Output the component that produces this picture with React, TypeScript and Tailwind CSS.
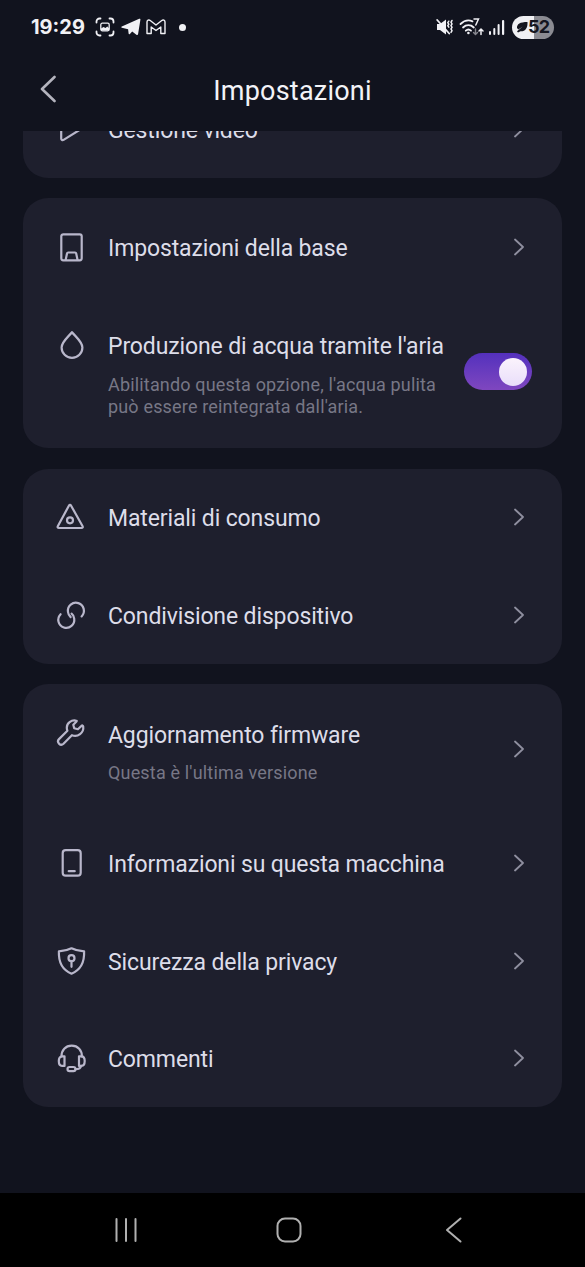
import type { ReactNode } from "react";

const icons = {
  play: (
    <path d="M6.2 6.2v19.400c0 1.400 1.300 2 2.400 1.300l15.400-9.600c1-.7 1-1.900 0-2.600L8.600 5c-1.100-.8-2.400-.2-2.400 1.200Z" />
  ),
  base: (
    <>
      <rect x="6.300" y="3.300" width="20.400" height="26" rx="2" />
      <path d="M10.700 28.800l1.300-6.300q.2-1 1.200-1h6.800q1 0 1.200 1l1.300 6.300" />
    </>
  ),
  drop: <path d="M17 3.200C13.500 7.500 6.600 13 6.600 18.400a10.400 10.400 0 0 0 20.800 0C27.400 13 20.500 7.500 17 3.200Z" />,
  consumables: (
    <>
      <path d="M13.900 4.700L2.800 25.300c-.5 1 0 1.700 1 1.700h22.800c1 0 1.500-.7 1-1.700L16.100 4.700c-.6-1.100-1.600-1.100-2.200 0Z" />
      <circle cx="15" cy="19.300" r="3" />
    </>
  ),
  share: (
    <>
      <path d="M26.600 17.400a8 8 0 1 0-13.600-4.400c.2 2.200 1 3.800 2.600 5" />
      <path d="M5.600 15.200a8 8 0 1 0 13.600 4.400c-.2-2.200-1-3.800-2.600-5" />
    </>
  ),
  wrench: (
    <path d="M20.700 3.600c-4.400-.8-8.900 2.600-8.900 7.100 0 1.100.2 2 .6 3L4 22.100c-2.900 3.100 1.500 7.500 4.500 4.600l8.400-8.500c5.800 2.500 12.200-2.500 11.300-8.700-.2-1.200-1-1.300-1.700-.6l-3.600 3.300-3.700-.9-.9-3.600 3.200-3.200c.6-.6.2-.9-.8-.9Z" />
  ),
  machine: (
    <>
      <rect x="7.700" y="3.200" width="18" height="25.500" rx="3" />
      <path d="M13.700 24.200h6" />
    </>
  ),
  privacy: (
    <>
      <path d="M16.500 3.300c-3.900 2-8.300 2.900-12.600 3.100C3.500 15.500 6.300 24.500 16.500 28.700c10.200-4.200 13-13.200 12.600-22.300C24.800 6.200 20.400 5.300 16.500 3.300Z" />
      <circle cx="16.500" cy="13.200" r="3" />
      <path d="M16.500 16.200v5.600" />
    </>
  ),
  headset: (
    <>
      <path d="M6.500 14.500C6.400 8.300 10.500 3.700 16.700 3.700S27 8.300 26.900 14.500" />
      <path d="M9.500 14.300H7c-2 0-3.200 1.700-3.200 4.800s1.200 4.800 3.200 4.800h2.500Z" />
      <path d="M24 14.300h2.500c2 0 3.200 1.700 3.200 4.800s-1.200 4.800-3.200 4.800H24Z" />
      <rect x="12.500" y="25" width="8" height="4.200" rx="2.100" />
      <path d="M20.500 27.200c3.300 0 5.300-.8 5.600-3.300" />
    </>
  ),
};

type IconName = keyof typeof icons;

const Icon = ({ name }: { name: IconName }) => (
  <svg
    viewBox="0 0 32 32"
    className="h-8 w-8 shrink-0 text-[#b9b7cb]"
    fill="none"
    stroke="currentColor"
    strokeWidth="2.2"
    strokeLinecap="round"
    strokeLinejoin="round"
  >
    {icons[name]}
  </svg>
);

const Chevron = () => (
  <svg viewBox="0 0 10 18" className="h-[18px] w-2.5 shrink-0" fill="none" stroke="#8f8f9f" strokeWidth="1.8" strokeLinecap="round" strokeLinejoin="round">
    <path d="M1 1.500l8 7.500-8 7.500" />
  </svg>
);

const Toggle = () => (
  <button
    role="switch"
    aria-checked="true"
    aria-label="Produzione di acqua"
    className="flex h-[37px] w-[68px] shrink-0 items-center justify-end rounded-full bg-linear-to-b from-[#5430bd] to-[#7f46bf] pr-[5px]"
  >
    <span className="h-7 w-7 rounded-full bg-linear-to-b from-[#fbf3fc] to-[#e9defa]" />
  </button>
);

const Card = ({ children }: { children: ReactNode }) => (
  <section className="rounded-[25px] bg-[#1e1f2d]">{children}</section>
);

const Row = ({ icon, label }: { icon: IconName; label: string }) => (
  <div className="flex h-[97.5px] items-center pr-[38px] pl-8">
    <Icon name={icon} />
    <span className="ml-[21px] flex-1 pt-1 text-[23px] leading-[30px] tracking-[-0.13px] whitespace-nowrap text-[#dddde9]">{label}</span>
    <Chevron />
  </div>
);

const StatusBar = () => (
  <div className="flex h-[54px] items-center justify-between pr-[31px] pl-[31px] text-[#f1f1f5]">
    <div className="flex items-center">
      <span className="w-[55px] font-['Inter'] text-[20px] font-bold whitespace-nowrap">19:29</span>
      <svg viewBox="0 0 20 20" className="ml-[9px] h-5 w-5" fill="none" stroke="currentColor" strokeWidth="1.8" strokeLinecap="round">
        <path d="M1.500 5.500V4.500a3 3 0 0 1 3-3h1M14.500 1.500h1a3 3 0 0 1 3 3v1M18.500 14.500v1a3 3 0 0 1-3 3h-1M5.500 18.500h-1a3 3 0 0 1-3-3v-1" />
        <rect x="5.800" y="6.200" width="8.400" height="7.600" rx="1.500" strokeWidth="1.300" />
        <path d="M6 13.500v-2l2.500-1.500 2 1 1.800-1.500 1.800 1.700V13.500Z" fill="currentColor" stroke="none" />
      </svg>
      <svg viewBox="0 0 20 18" className="ml-[6px] h-[18px] w-5" fill="currentColor">
        <path d="M.8 8.600L18.200.8c.8-.4 1.300.1 1.200.9l-2.300 14.400c-.2 1-.9 1.200-1.700.6l-4.200-3.200-2.300 2.400c-.6.6-1.200.4-1.300-.4l-.5-4.200L.9 9.800c-.7-.2-.8-.9-.1-1.200Z" />
      </svg>
      <svg viewBox="0 0 20 16" className="ml-[5px] h-4 w-5" fill="none" stroke="currentColor" strokeWidth="1.4" strokeLinejoin="round">
        <path d="M1 14.500V3c0-1.800 1.800-2.600 3.200-1.500L10 6l5.800-4.500C17.200.4 19 1.200 19 3v11.500h-4.200V8L10 11.500 5.200 8v6.500Z" />
      </svg>
      <span className="ml-[13px] h-[7px] w-[7px] rounded-full bg-current" />
    </div>

    <div className="flex items-center">
      <svg viewBox="0 0 18 18" className="h-[18px] w-[18px]" fill="none" stroke="currentColor" strokeWidth="1.5" strokeLinecap="round">
        <path d="M1 6h3l6-4.500v15L4 12H1Z" fill="currentColor" stroke="none" />
        <path d="M1.200 2l12 13.500" strokeWidth="1.8" />
        <path d="M12.800 3.200l-1 1.500 1 1.500-1 1.500 1 1.500M16 2.500l-1 1.700 1 1.700-1 1.700 1 1.700-1 1.700 1 1.700-1 1.700" />
      </svg>
      <svg viewBox="0 0 26 20" className="ml-[5px] h-5 w-[26px]" fill="none" stroke="currentColor" strokeWidth="1.8" strokeLinecap="round">
        <path d="M1.500 7C5 3.600 9.500 2.700 13.500 4.300M4 10.500c3.200-3 7.600-3 10.800 0M6.800 13.700c1.600-1.500 3.600-1.500 5.200 0" />
        <circle cx="9.400" cy="16" r="1.300" fill="currentColor" stroke="none" />
        <path d="M15 2h4.500l-2.700 6" strokeWidth="1.5" />
        <path d="M16.500 12v5.500m-2-2l2 2 2-2" stroke="#85858d" strokeWidth="1.4" />
        <path d="M22 17.500V12m-2 2l2-2 2 2" strokeWidth="1.5" />
      </svg>
      <svg viewBox="0 0 16 16" className="ml-[4px] h-4 w-4" fill="currentColor">
        <rect x="0" y="12" width="2" height="4" rx="1" />
        <rect x="4.300" y="9" width="2" height="7" rx="1" />
        <rect x="8.600" y="5" width="2" height="11" rx="1" />
        <rect x="13" y="1" width="2.200" height="15" rx="1" />
      </svg>
      <div className="ml-[7px] flex h-[23px] w-[42px] items-center rounded-full bg-linear-to-r from-[#f0f0f3] from-52% to-[#8b8b92] to-52% pl-1 text-[#15161f]">
        <svg viewBox="0 0 12 12" className="h-3 w-3 shrink-0" fill="currentColor">
          <path d="M1 7C.8 3 4 1 11.500 1c.3 6-2 9.500-7 9.300L2 11.500 1 10.300 6.800 5.500 2.300 8.600Z" />
        </svg>
        <span className="font-['Inter'] text-[18px] leading-none font-bold tracking-[-0.8px]">52</span>
      </div>
    </div>
  </div>
);

const NavBar = () => (
  <nav className="flex h-[74px] items-center bg-black pl-[114px] text-[#b0b0b0]">
    <svg viewBox="0 0 24 26" className="h-[26px] w-6" stroke="currentColor" strokeWidth="2" strokeLinecap="round">
      <path d="M2.500 2v22M12 2v22M21.500 2v22" />
    </svg>
    <svg viewBox="0 0 26 26" className="ml-[138px] h-[26px] w-[26px]" fill="none" stroke="currentColor" strokeWidth="2">
      <rect x="1.500" y="1.500" width="23" height="23" rx="7.500" />
    </svg>
    <svg viewBox="0 0 17 26" className="ml-[143px] h-[26px] w-[17px]" fill="none" stroke="currentColor" strokeWidth="2" strokeLinecap="round" strokeLinejoin="round">
      <path d="M15.500 1.500L2 13l13.500 11.500" />
    </svg>
  </nav>
);

export default function App() {
  return (
    <div className="flex h-[1267px] w-[585px] flex-col overflow-hidden bg-[#11131e] font-['Roboto',sans-serif]">
      <StatusBar />

      <header className="grid h-[77px] grid-cols-[1fr_auto_1fr] items-center pb-[3px]">
        <svg viewBox="0 0 16 28" className="mb-[5px] ml-10 h-7 w-4" fill="none" stroke="#b4b4be" strokeWidth="2.6" strokeLinecap="round" strokeLinejoin="round">
          <path d="M14.500 2L2 14l12.500 12" />
        </svg>
        <h1 className="text-[27px] leading-8 tracking-[0.22px] text-[#f3f3f8]">Impostazioni</h1>
      </header>

      <main className="flex-1 overflow-hidden px-[23px]">
        <div className="mt-[-51px] flex flex-col gap-[20.5px]">
          <Card>
            <Row icon="play" label="Gestione video" />
          </Card>

          <Card>
            <Row icon="base" label="Impostazioni della base" />
            <div className="flex h-[152.5px] items-center pr-[30px] pl-8">
              <div className="flex h-full flex-1 pt-[33px]">
                <Icon name="drop" />
                <div className="ml-[21px] pt-[3.5px]">
                  <p className="text-[23px] leading-[30px] tracking-[-0.13px] whitespace-nowrap text-[#dddde9]">Produzione di acqua tramite l'aria</p>
                  <p className="mt-[11.5px] text-[18px] leading-[22px] tracking-[0.17px] whitespace-nowrap text-[#777786]">
                    Abilitando questa opzione, l'acqua pulita
                    <br />
                    può essere reintegrata dall'aria.
                  </p>
                </div>
              </div>
              <Toggle />
            </div>
          </Card>

          <Card>
            <Row icon="consumables" label="Materiali di consumo" />
            <Row icon="share" label="Condivisione dispositivo" />
          </Card>

          <Card>
            <div className="flex h-[130.5px] items-center pr-[38px] pl-8">
              <div className="flex h-full flex-1 pt-[33px]">
                <Icon name="wrench" />
                <div className="ml-[21px] pt-[3.5px]">
                  <p className="text-[23px] leading-[30px] tracking-[-0.13px] whitespace-nowrap text-[#dddde9]">Aggiornamento firmware</p>
                  <p className="mt-[11.5px] text-[18px] leading-[22px] tracking-[0.17px] text-[#777786]">Questa è l'ultima versione</p>
                </div>
              </div>
              <Chevron />
            </div>
            <Row icon="machine" label="Informazioni su questa macchina" />
            <Row icon="privacy" label="Sicurezza della privacy" />
            <Row icon="headset" label="Commenti" />
          </Card>
        </div>
      </main>

      <NavBar />
    </div>
  );
}
